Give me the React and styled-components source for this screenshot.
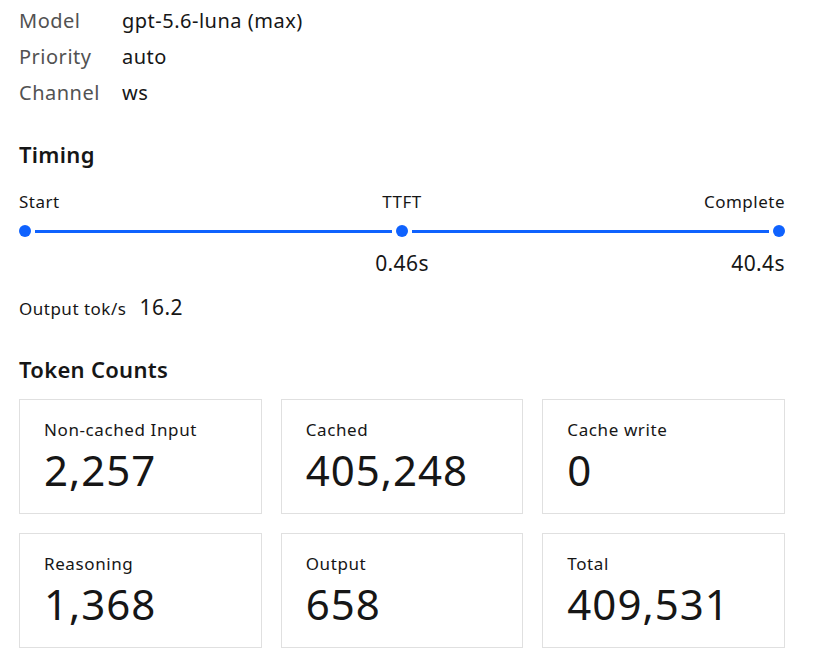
import React from "react";
import styled, { createGlobalStyle } from "styled-components";

const Global = createGlobalStyle`
  html, body { margin: 0; padding: 0; background: #ffffff; }
  body {
    font-family: "Noto Sans", "Open Sans", sans-serif;
    color: #161616;
  }
`;

const Page = styled.div`
  padding: 2px 29px 0 19px;
  display: flex;
  flex-direction: column;
`;

const MetaList = styled.dl`
  margin: 0;
  display: grid;
  grid-template-columns: 103px 1fr;
  grid-auto-rows: 36px;
  align-items: center;
  font-size: 20px;
  letter-spacing: 0.5px;
`;

const MetaKey = styled.dt`
  color: #525252;
`;

const MetaValue = styled.dd`
  margin: 0;
  color: #161616;
`;

const SectionTitle = styled.h2`
  margin: ${(p) => p.$top}px 0 0;
  font-size: 22px;
  font-weight: 600;
  line-height: 30px;
  letter-spacing: 0.3px;
  color: #161616;
`;

const TimelineLabels = styled.div`
  margin-top: 22px;
  display: grid;
  grid-template-columns: 1fr auto 1fr;
  font-size: 17px;
  letter-spacing: 0.5px;
  line-height: 22px;
  color: #161616;
`;

const Cell = styled.span`
  text-align: ${(p) => p.$align};
`;

const Track = styled.div`
  margin-top: 12px;
  display: flex;
  align-items: center;
  gap: 4px;
`;

const Dot = styled.span`
  width: 12px;
  height: 12px;
  border-radius: 50%;
  background: #0f62fe;
  flex: none;
`;

const Segment = styled.span`
  flex: 1;
  height: 3px;
  background: #0f62fe;
`;

const TimelineValues = styled.div`
  margin-top: 12px;
  display: grid;
  grid-template-columns: 1fr auto 1fr;
  font-size: 21px;
  letter-spacing: 0.4px;
  line-height: 28px;
`;

const Rate = styled.div`
  margin-top: 15px;
  display: flex;
  align-items: baseline;
  gap: 13px;
  line-height: 30px;
`;

const RateLabel = styled.span`
  font-size: 17px;
  letter-spacing: 0.5px;
  color: #161616;
`;

const RateValue = styled.span`
  font-size: 21px;
  letter-spacing: 0.5px;
`;

const CardGrid = styled.div`
  margin-top: 15px;
  display: grid;
  grid-template-columns: repeat(3, 1fr);
  gap: 19px;
`;

const Card = styled.div`
  border: 1px solid #e0e0e0;
  height: 115px;
  box-sizing: border-box;
  padding: 18px 24px 0;
  display: flex;
  flex-direction: column;
  gap: 3px;
`;

const CardLabel = styled.span`
  font-size: 17px;
  letter-spacing: 0.6px;
  line-height: 24px;
  color: #161616;
`;

const CardValue = styled.span`
  font-size: 42px;
  font-weight: 400;
  letter-spacing: 1px;
  line-height: 50px;
  color: #161616;
`;

const meta = [
  ["Model", "gpt-5.6-luna (max)"],
  ["Priority", "auto"],
  ["Channel", "ws"],
];

const counts = [
  ["Non-cached Input", "2,257"],
  ["Cached", "405,248"],
  ["Cache write", "0"],
  ["Reasoning", "1,368"],
  ["Output", "658"],
  ["Total", "409,531"],
];

export default function App() {
  return (
    <>
      <Global />
      <Page>
        <MetaList>
          {meta.map(([k, v]) => (
            <React.Fragment key={k}>
              <MetaKey>{k}</MetaKey>
              <MetaValue>{v}</MetaValue>
            </React.Fragment>
          ))}
        </MetaList>

        <SectionTitle $top={29}>Timing</SectionTitle>
        <TimelineLabels>
          <Cell $align="left">Start</Cell>
          <Cell $align="center">TTFT</Cell>
          <Cell $align="right">Complete</Cell>
        </TimelineLabels>
        <Track>
          <Dot />
          <Segment />
          <Dot />
          <Segment />
          <Dot />
        </Track>
        <TimelineValues>
          <Cell $align="left" />
          <Cell $align="center">0.46s</Cell>
          <Cell $align="right">40.4s</Cell>
        </TimelineValues>

        <Rate>
          <RateLabel>Output tok/s</RateLabel>
          <RateValue>16.2</RateValue>
        </Rate>

        <SectionTitle $top={30}>Token Counts</SectionTitle>
        <CardGrid>
          {counts.map(([label, value]) => (
            <Card key={label}>
              <CardLabel>{label}</CardLabel>
              <CardValue>{value}</CardValue>
            </Card>
          ))}
        </CardGrid>
      </Page>
    </>
  );
}
